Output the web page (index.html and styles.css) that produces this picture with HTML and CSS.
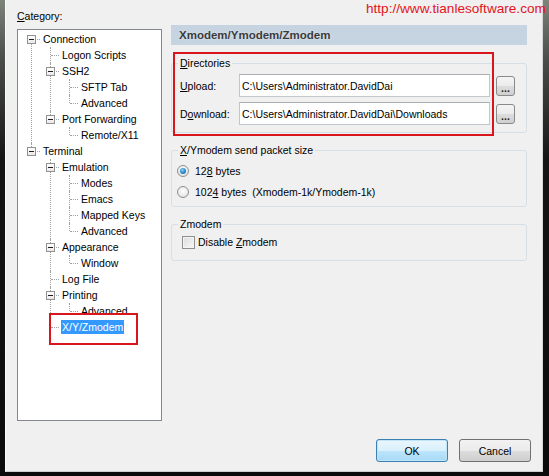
FILE: index.html
```html
<html>
<head>
    <link rel="stylesheet" href="styles.css">
</head>
<body>
<div class="dialog">
    <div class="content">
        <div class="side">
            <div class="cat-label"><u>C</u>ategory:</div>
            <div class="tree-box">
                <ul class="tree">
                    <li><div class="node"><span class="box"></span><span class="text">Connection</span></div>
                        <ul>
                            <li><div class="node"><span class="text">Logon Scripts</span></div></li>
                            <li><div class="node"><span class="box"></span><span class="text">SSH2</span></div>
                                <ul>
                                    <li><div class="node"><span class="text">SFTP Tab</span></div></li>
                                    <li><div class="node"><span class="text">Advanced</span></div></li>
                                </ul>
                            </li>
                            <li><div class="node"><span class="box"></span><span class="text">Port Forwarding</span></div>
                                <ul>
                                    <li><div class="node"><span class="text">Remote/X11</span></div></li>
                                </ul>
                            </li>
                        </ul>
                    </li>
                    <li><div class="node"><span class="box"></span><span class="text">Terminal</span></div>
                        <ul>
                            <li><div class="node"><span class="box"></span><span class="text">Emulation</span></div>
                                <ul>
                                    <li><div class="node"><span class="text">Modes</span></div></li>
                                    <li><div class="node"><span class="text">Emacs</span></div></li>
                                    <li><div class="node"><span class="text">Mapped Keys</span></div></li>
                                    <li><div class="node"><span class="text">Advanced</span></div></li>
                                </ul>
                            </li>
                            <li><div class="node"><span class="box"></span><span class="text">Appearance</span></div>
                                <ul>
                                    <li><div class="node"><span class="text">Window</span></div></li>
                                </ul>
                            </li>
                            <li><div class="node"><span class="text">Log File</span></div></li>
                            <li><div class="node"><span class="box"></span><span class="text">Printing</span></div>
                                <ul>
                                    <li><div class="node"><span class="text">Advanced</span></div></li>
                                </ul>
                            </li>
                            <li><div class="node sel"><span class="text">X/Y/Zmodem</span></div></li>
                        </ul>
                    </li>
                </ul>
            </div>
        </div>

        <div class="panel">
            <div class="panel-title">Xmodem/Ymodem/Zmodem</div>

            <fieldset class="group dirs">
                <legend><u>D</u>irectories</legend>
                <div class="dir-row">
                    <label for="upload"><u>U</u>pload:</label>
                    <input type="text" id="upload" value="C:\Users\Administrator.DavidDai">
                    <button class="browse">...</button>
                </div>
                <div class="dir-row">
                    <label for="download">D<u>o</u>wnload:</label>
                    <input type="text" id="download" value="C:\Users\Administrator.DavidDai\Downloads">
                    <button class="browse">...</button>
                </div>
            </fieldset>

            <fieldset class="group packets">
                <legend><u>X</u>/Ymodem send packet size</legend>
                <div class="opt"><span class="radio on"></span><span>12<u>8</u> bytes</span></div>
                <div class="opt"><span class="radio"></span><span>102<u>4</u> bytes&nbsp; (Xmodem-1k/Ymodem-1k)</span></div>
            </fieldset>

            <fieldset class="group zmodem">
                <legend>Zmodem</legend>
                <div class="opt"><span class="check"></span><span>Disable <u>Z</u>modem</span></div>
            </fieldset>
        </div>
    </div>

    <div class="footer">
        <button class="btn default">OK</button>
        <button class="btn">Cancel</button>
    </div>

    <!-- red notes drawn on top of the dialog -->
    <div class="url">http://www.tianlesoftware.com</div>
    <div class="mark mark-dirs"></div>
    <div class="mark mark-node"></div>
</div>
</body>
</html>
```

FILE: styles.css
```css
body {
    margin: 0;
    width: 549px;
    height: 476px;
    overflow: hidden;
    background: linear-gradient(#7d857b 0, #4a4d49 60px, #151515 160px, #0b0b0b 100%);
    font-family: "Liberation Sans", Arial, sans-serif;
    font-size: 10.5px;
    color: #000;
}
u { text-decoration: underline; text-underline-offset: 1px; }

.dialog {
    position: relative;
    box-sizing: border-box;
    margin-left: 5px;
    width: 538px;
    height: 472px;
    padding: 8px 11px 9px 11px;
    background: #f0f0f0;
    border-left: 1px solid #fbfbfb;
    border-right: 1px solid #d6d6d6;
    border-bottom: 1px solid #cdcdcd;
    display: flex;
    flex-direction: column;
}
.content { display: flex; gap: 9px; }

/* left: category tree */
.side { width: 145px; }
.cat-label { line-height: 16px; height: 16px; }
.tree-box {
    box-sizing: border-box;
    margin-top: 5px;
    height: 392px;
    padding: 1px 0 0 4px;
    background: #fff;
    border: 1px solid #828790;
}
.tree, .tree ul { list-style: none; margin: 0; padding: 0; }
.tree ul { padding-left: 19px; }
.tree li { position: relative; }
.tree li::before {
    content: '';
    position: absolute;
    left: 9px;
    top: 0;
    bottom: 0;
    border-left: 1px dotted #a0a0a0;
}
.tree > li:first-child::before { top: 8px; }
.tree li:last-child::before { bottom: auto; height: 8px; }
.tree > li:first-child:last-child::before { display: none; }

.node { position: relative; height: 16px; padding-left: 19px; white-space: nowrap; }
.node::before {
    content: '';
    position: absolute;
    left: 10px;
    top: 8px;
    width: 8px;
    border-top: 1px dotted #a0a0a0;
}
.node .text {
    display: inline-block;
    line-height: 14px;
    margin: 1px 0 1px 1px;
    padding: 0 1px;
}
.node.sel .text { background: #3399ff; color: #fff; }
.box {
    position: absolute;
    z-index: 1;
    left: 5px;
    top: 4px;
    width: 9px;
    height: 9px;
    box-sizing: border-box;
    border: 1px solid #919191;
    background: linear-gradient(#fff, #e8e8e8);
}
.box::after {
    content: '';
    position: absolute;
    left: 1px;
    top: 3px;
    width: 5px;
    height: 1px;
    background: #1e1e1e;
}

/* right: options page */
.panel { width: 356px; padding-top: 17px; }
.panel-title {
    height: 20px;
    line-height: 20px;
    padding-left: 8px;
    background: #c6d4e1;
    color: #3a3a3a;
    font-weight: bold;
    font-size: 11.5px;
    text-shadow: 0 0 2px #e8eef4;
}
.group {
    margin: 10px 0 0;
    padding: 0 10px 7px 6px;
    border: 1px solid #d5dfe5;
    border-radius: 3px;
    min-width: 0;
}
.group legend { padding: 0 2px; line-height: 14px; }
.dirs { margin-top: 11px; }

.dir-row { display: flex; align-items: center; height: 23px; margin-top: 5px; padding-left: 2px; }
.dir-row:first-of-type { margin-top: 4px; }
.dir-row label { width: 59px; }
.dir-row input {
    box-sizing: border-box;
    width: 251px;
    height: 23px;
    padding: 0 2px;
    border: 1px solid #c2c6cd;
    border-top-color: #abadb3;
    background: #fff;
    font: inherit;
    color: #000;
    outline: none;
}
.browse {
    box-sizing: border-box;
    width: 19px;
    height: 20px;
    margin-left: 6px;
    padding: 4px 0 0;
    border: 1px solid #8a8a8a;
    border-radius: 3px;
    background: linear-gradient(#f4f4f4 0, #ebebeb 50%, #dddddd 50%, #d0d0d0 100%);
    font: inherit;
    font-weight: bold;
    line-height: 12px;
    color: #222;
}

.opt { display: flex; align-items: center; height: 16px; margin-top: 5px; white-space: pre; }
.packets .opt:first-of-type { margin-top: 6px; }
.packets { padding-bottom: 6px; }
.zmodem .opt { margin-top: 3px; }
.zmodem { padding-bottom: 10px; }

.radio {
    box-sizing: border-box;
    width: 12px;
    height: 12px;
    margin: 0 6px 0 -1px;
    border: 1px solid #8e8f8f;
    border-radius: 50%;
    background: radial-gradient(circle at 50% 40%, #fff 0, #e6e6e6 70%, #cfcfcf 100%);
    display: flex;
    align-items: center;
    justify-content: center;
}
.radio.on::after {
    content: '';
    width: 6px;
    height: 6px;
    border-radius: 50%;
    background: radial-gradient(circle at 40% 35%, #8fd0f5 0, #2b8ed1 50%, #0b4d88 100%);
}
.check {
    box-sizing: border-box;
    width: 13px;
    height: 13px;
    margin: 0 3px 0 4px;
    border: 1px solid #8e8f8f;
    background: linear-gradient(135deg, #dcdcdc, #f8f8f8);
    box-shadow: inset 0 0 0 1px #f4f4f4;
}

.footer { margin-top: auto; display: flex; justify-content: flex-end; gap: 11px; }
.btn {
    box-sizing: border-box;
    width: 72px;
    height: 23px;
    border: 1px solid #707070;
    border-radius: 3px;
    background: linear-gradient(#f2f2f2 0, #ebebeb 50%, #dddddd 50%, #cfcfcf 100%);
    font: inherit;
    color: #000;
    padding: 0;
}
.btn.default {
    border-color: #3c7fb1;
    box-shadow: inset 0 0 0 1px #bfe5f9;
    background: linear-gradient(#eaf6fd 0, #d9f0fc 50%, #bee6fd 50%, #a7d9f5 100%);
}

/* red notes */
.url {
    position: absolute;
    left: 360px;
    top: 0;
    font-size: 13.6px;
    line-height: 18px;
    color: #e3141c;
    white-space: nowrap;
}
.mark { position: absolute; border: 2px solid #d9161d; }
.mark-dirs { left: 167px; top: 52px; width: 317px; height: 80px; }
.mark-node { left: 43px; top: 313px; width: 85px; height: 28px; }
```
